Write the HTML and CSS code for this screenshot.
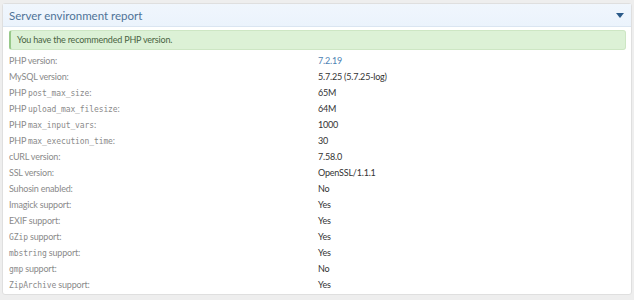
FILE: index.html
```html
<!DOCTYPE html>
<html lang="en">
<head>
    <meta charset="UTF-8">
    <title>Server environment report</title>
    <link rel="stylesheet" href="styles.css">
</head>
<body>
    <div class="block">
        <h2 class="block-header">
            <span>Server environment report</span>
            <span class="toggle"></span>
        </h2>
        <div class="block-body">
            <div class="alert success">You have the recommended PHP version.</div>
            <dl class="pairs">
                <dt>PHP version:</dt><dd class="link">7.2.19</dd>
                <dt>MySQL version:</dt><dd>5.7.25 (5.7.25-log)</dd>
                <dt>PHP <code>post_max_size</code>:</dt><dd>65M</dd>
                <dt>PHP <code>upload_max_filesize</code>:</dt><dd>64M</dd>
                <dt>PHP <code>max_input_vars</code>:</dt><dd>1000</dd>
                <dt>PHP <code>max_execution_time</code>:</dt><dd>30</dd>
                <dt>cURL version:</dt><dd>7.58.0</dd>
                <dt>SSL version:</dt><dd>OpenSSL/1.1.1</dd>
                <dt>Suhosin enabled:</dt><dd>No</dd>
                <dt>Imagick support:</dt><dd>Yes</dd>
                <dt>EXIF support:</dt><dd>Yes</dd>
                <dt><code>GZip</code> support:</dt><dd>Yes</dd>
                <dt><code>mbstring</code> support:</dt><dd>Yes</dd>
                <dt><code>gmp</code> support:</dt><dd>No</dd>
                <dt><code>ZipArchive</code> support:</dt><dd>Yes</dd>
            </dl>
        </div>
    </div>
</body>
</html>
```

FILE: styles.css
```css
body {
    margin: 0;
    padding: 3px 2px;
    background-color: #eeeeee;
    font-family: Lato, "Open Sans", sans-serif;
    font-size: 9px;
    letter-spacing: -0.2px;
    color: #333;
}
.block {
    background: #fff;
    border: 1px solid #dfdfdf;
    border-radius: 3px;
    padding-bottom: 1px;
}
.block-header {
    display: flex;
    justify-content: space-between;
    align-items: center;
    margin: 0;
    height: 22px;
    padding: 0 6px;
    background: linear-gradient(to bottom, #f0f6fd, #ebf3fc);
    border-bottom: 1px solid #dae5f1;
    font-size: 11.5px;
    font-weight: normal;
    letter-spacing: 0;
    color: #4f7398;
}
.toggle {
    width: 0;
    height: 0;
    border-left: 4px solid transparent;
    border-right: 4px solid transparent;
    border-top: 5px solid #2b5a89;
    margin-right: 1px;
}
.block-body {
    padding: 3px 5px 0 6px;
}
.alert {
    padding: 0 6px;
    height: 18px;
    line-height: 18px;
    border: 1px solid #cde6c4;
    border-left: 2px solid #98c98a;
    border-radius: 3px;
    background: #dcf1d6;
    color: #4a6443;
    margin-bottom: 3px;
}
.pairs {
    display: grid;
    grid-template-columns: 309px 1fr;
    grid-auto-rows: 16px;
    align-items: center;
    margin: 0;
    line-height: 16px;
}
.pairs dt {
    color: #8a8a8a;
}
.pairs dd {
    margin: 0;
    color: #333;
}
.pairs dd.link {
    color: #4d82b3;
}
code {
    font-family: "DejaVu Sans Mono", monospace;
    font-size: 8px;
    letter-spacing: -0.1px;
}
```
